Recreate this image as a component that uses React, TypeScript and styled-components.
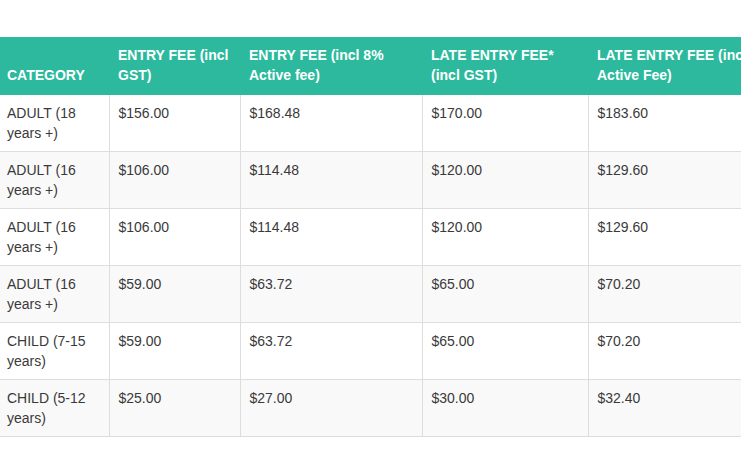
import React from "react";
import styled, { createGlobalStyle } from "styled-components";

const Global = createGlobalStyle`
  html, body { margin: 0; padding: 0; background: #fff; overflow: hidden; }
  body { font-family: "Liberation Sans", Arial, sans-serif; font-size: 14px; color: #3a3a3a; }
`;

const Page = styled.div`
  padding-top: 37px;
  width: 741px;
  overflow: hidden;
`;

const Table = styled.table`
  border-collapse: collapse;
  border-spacing: 0;
  table-layout: fixed;
  width: 804px;
`;

const HeadCell = styled.th`
  background: #2cb99d;
  color: #fff;
  font-weight: bold;
  text-align: left;
  vertical-align: bottom;
  padding: 8px 8px 8px 9px;
  line-height: 20px;
  border-bottom: 2px solid #2cb99d;
  white-space: normal;
  &:first-child { padding-left: 7px; }
`;

const Row = styled.tr<{ $striped: boolean }>`
  background: ${(p) => (p.$striped ? "#f9f9f9" : "#fff")};
`;

const Cell = styled.td`
  padding: 8px 8px 8px 9px;
  line-height: 20px;
  vertical-align: top;
  border-top: 1px solid #ddd;
  border-bottom: 1px solid #ddd;
  border-left: 1px solid #ddd;
  &:first-child { border-left: none; padding-left: 7px; }
`;

const widths = [109, 131, 182, 166, 216];

const headers = [
  "CATEGORY",
  "ENTRY FEE (incl GST)",
  "ENTRY FEE (incl 8% Active fee)",
  "LATE ENTRY FEE* (incl GST)",
  "LATE ENTRY FEE (incl 8% Active Fee)",
];

const rows = [
  ["ADULT (18 years +)", "$156.00", "$168.48", "$170.00", "$183.60"],
  ["ADULT (16 years +)", "$106.00", "$114.48", "$120.00", "$129.60"],
  ["ADULT (16 years +)", "$106.00", "$114.48", "$120.00", "$129.60"],
  ["ADULT (16 years +)", "$59.00", "$63.72", "$65.00", "$70.20"],
  ["CHILD (7-15 years)", "$59.00", "$63.72", "$65.00", "$70.20"],
  ["CHILD (5-12 years)", "$25.00", "$27.00", "$30.00", "$32.40"],
];

export default function App() {
  return (
    <>
      <Global />
      <Page>
        <Table>
          <colgroup>
            {widths.map((w, i) => (
              <col key={i} style={{ width: w }} />
            ))}
          </colgroup>
          <thead>
            <tr>
              {headers.map((h) => (
                <HeadCell key={h}>{h}</HeadCell>
              ))}
            </tr>
          </thead>
          <tbody>
            {rows.map((r, i) => (
              <Row key={i} $striped={i % 2 === 1}>
                {r.map((c, j) => (
                  <Cell key={j}>{c}</Cell>
                ))}
              </Row>
            ))}
          </tbody>
        </Table>
      </Page>
    </>
  );
}
